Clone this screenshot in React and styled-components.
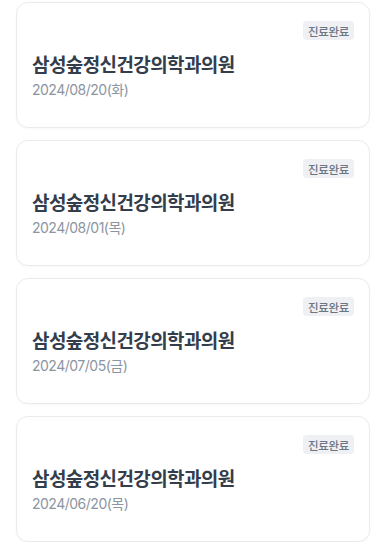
import React from "react";
import styled, { createGlobalStyle } from "styled-components";

const Global = createGlobalStyle`
  html, body { margin: 0; padding: 0; background: #ffffff; }
  body { font-family: "Inter", "Noto Sans CJK KR", sans-serif; -webkit-font-smoothing: antialiased; }
  * { box-sizing: border-box; }
`;

const List = styled.div`
  display: flex;
  flex-direction: column;
  gap: 12px;
  padding: 2px 16px 0;
`;

const Card = styled.div`
  display: flex;
  flex-direction: column;
  height: 126px;
  padding: 18px 15px 0;
  border: 1px solid #e9ebee;
  border-radius: 12px;
  background: #fff;
  box-shadow: 0 1px 3px rgba(0, 0, 0, 0.03);
`;

const BadgeRow = styled.div`
  display: flex;
  justify-content: flex-end;
`;

const Badge = styled.span`
  display: inline-flex;
  align-items: center;
  height: 19px;
  padding: 0 5px;
  border-radius: 4px;
  background: #eef0f3;
  color: #6b7684;
  font-family: "Noto Sans CJK KR", sans-serif;
  font-size: 11.5px;
  font-weight: 500;
  letter-spacing: -0.3px;
`;

const Title = styled.div`
  margin-top: 12px;
  font-family: "Noto Sans CJK KR", sans-serif;
  font-size: 19px;
  line-height: 24px;
  font-weight: 700;
  letter-spacing: -0.6px;
  color: #333d4b;
`;

const DateText = styled.div`
  margin-top: 5px;
  font-family: "Inter", "Noto Sans CJK KR", sans-serif;
  font-size: 14px;
  line-height: 18px;
  letter-spacing: -0.5px;
  color: #8b95a1;
`;

const visits = [
  { name: "삼성숲정신건강의학과의원", date: "2024/08/20(화)" },
  { name: "삼성숲정신건강의학과의원", date: "2024/08/01(목)" },
  { name: "삼성숲정신건강의학과의원", date: "2024/07/05(금)" },
  { name: "삼성숲정신건강의학과의원", date: "2024/06/20(목)" },
];

export default function App() {
  return (
    <>
      <Global />
      <List>
        {visits.map((v, i) => (
          <Card key={i}>
            <BadgeRow>
              <Badge>진료완료</Badge>
            </BadgeRow>
            <Title>{v.name}</Title>
            <DateText>{v.date}</DateText>
          </Card>
        ))}
      </List>
    </>
  );
}
